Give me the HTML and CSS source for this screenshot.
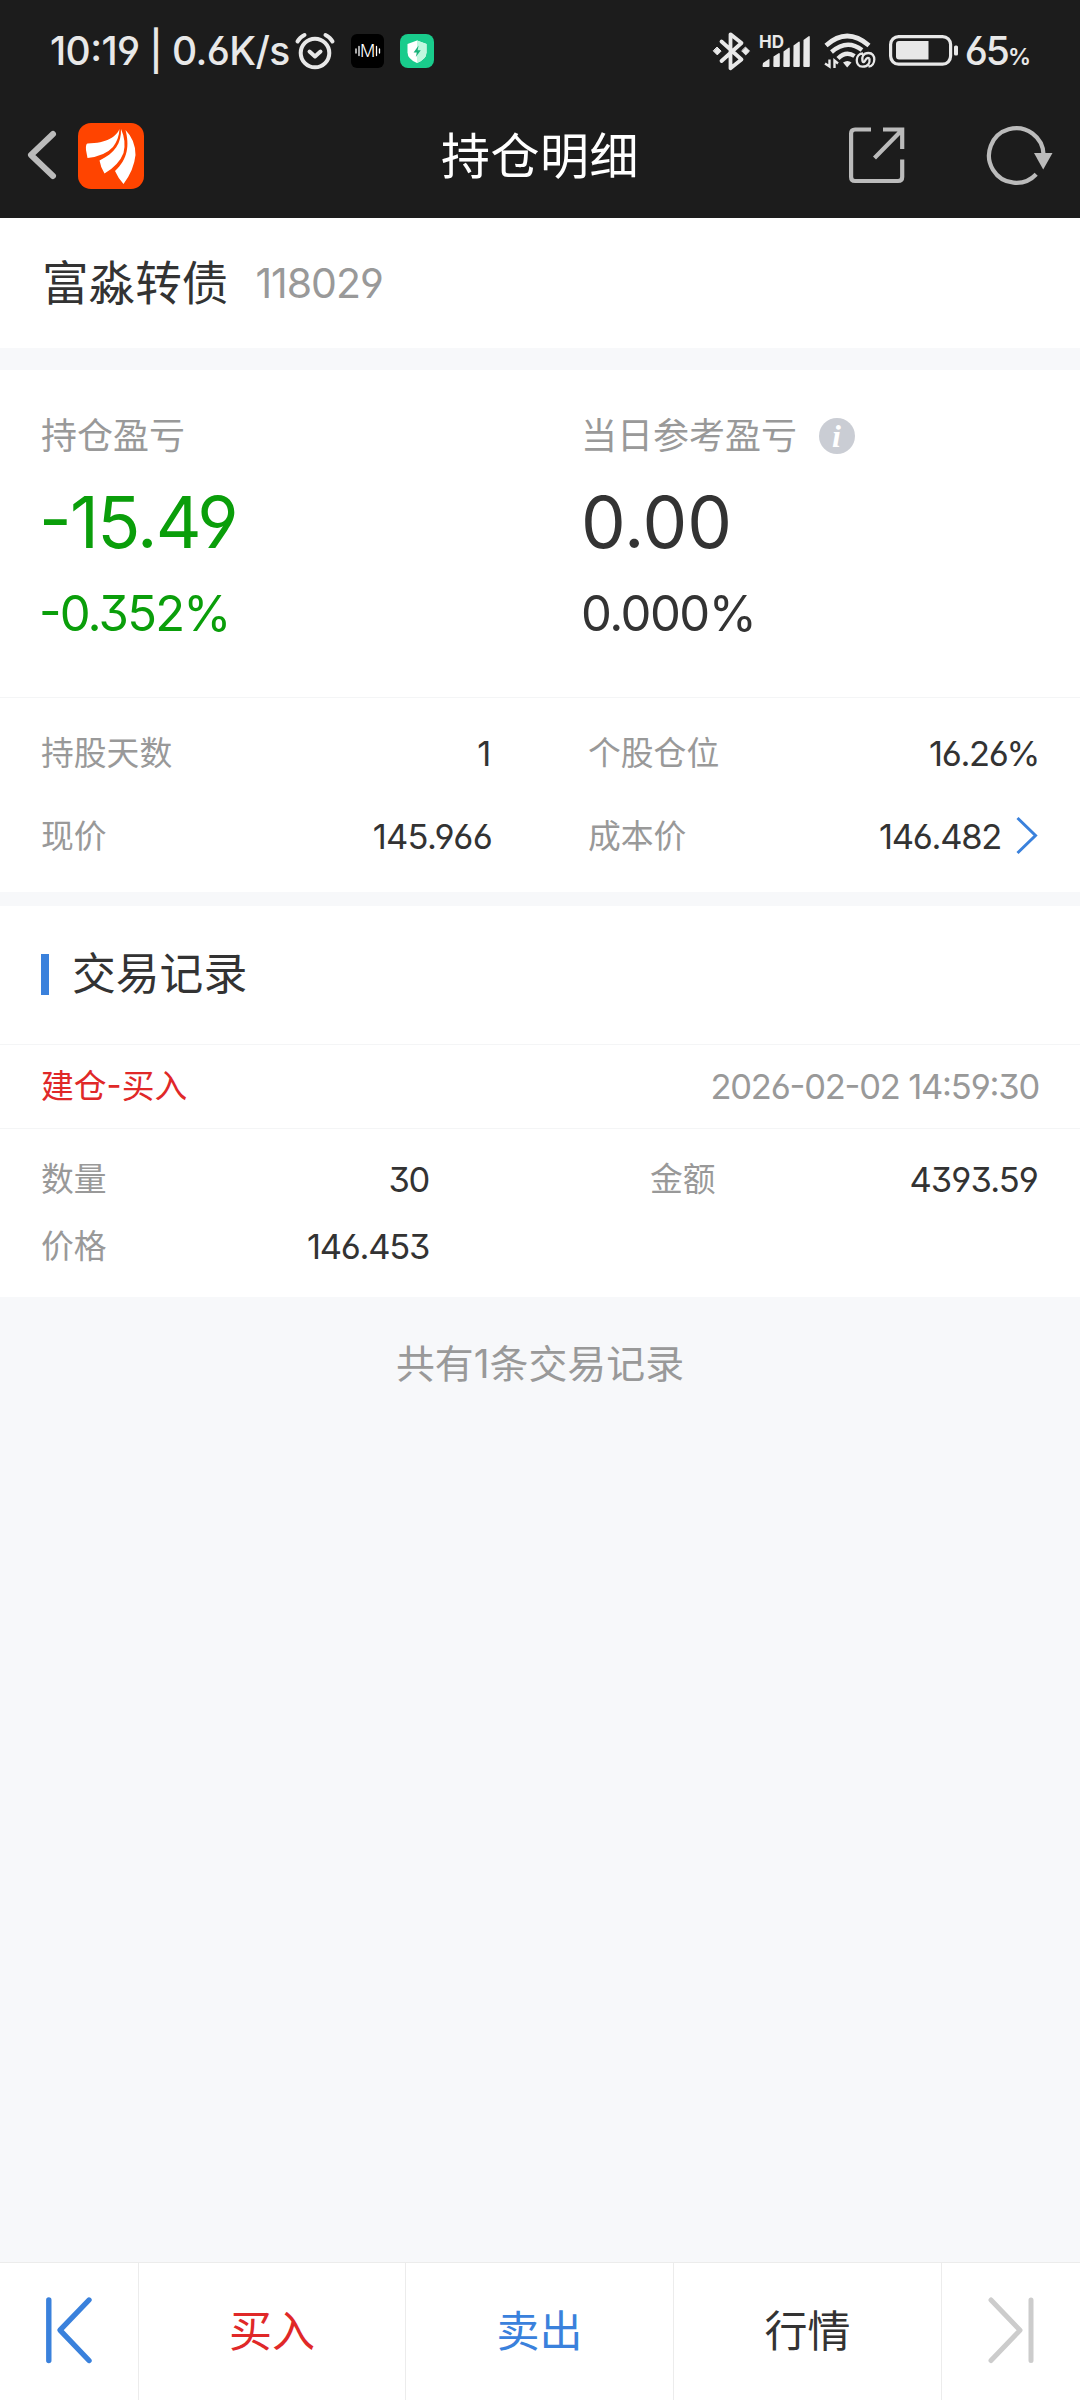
FILE: index.html
```html
<!DOCTYPE html>
<html lang="zh-CN">
<head>
<meta charset="utf-8">
<title>持仓明细</title>
<link rel="stylesheet" href="styles.css">
</head>
<body>
<div class="screen">
  <header class="top">
    <div class="status">
      <span class="clock">10:19 | 0.6K/s</span>
      <svg class="alarm" width="40" height="38" viewBox="0 0 40 38" fill="none" stroke="#e8e8e8" stroke-width="4" stroke-linecap="round" stroke-linejoin="round">
        <circle cx="20" cy="21" r="14.3"/>
        <path d="M14.5 19.5l5.5 5 5.500-5M2.500 9.500Q4.500 5.500 9.500 3M37.500 9.500Q35.500 5.500 30.500 3"/>
      </svg>
      <svg class="chip-m" width="33" height="34" viewBox="0 0 33 34">
        <rect width="33" height="34" rx="6" fill="#000"/>
        <path d="M5 15v4M8 12.500v9M25.500 12.500v9M28.500 15v4" stroke="#fff" stroke-width="1.300" stroke-linecap="round"/>
        <text class="m-text" x="16.700" y="23" text-anchor="middle">M</text>
      </svg>
      <svg class="chip-shield" width="34" height="34" viewBox="0 0 34 34">
        <rect width="34" height="34" rx="8" fill="#19cc8c"/>
        <path d="M17 6.500l9.500 3.500v8.500q0 6.500-9.500 10.500q-9.500-4-9.500-10.500V10z" fill="#fff"/>
        <path d="M17 6.500l9.500 3.500v8.500q0 6.500-9.500 10.500z" fill="#bff8df"/>
        <path d="M18.600 11.500l-5 7h3.200l-1 4.500 5-6.700h-3.200z" fill="#19b27b"/>
      </svg>
      <div class="status-right">
        <svg class="bt" width="37" height="40" viewBox="0 0 37 40" fill="none" stroke="#e8e8e8" stroke-width="3.800" stroke-linejoin="round" stroke-linecap="round">
          <path d="M8.500 10.500L28.500 28.500 17.500 37.300V3.300L28.500 12 8.500 30"/>
          <path d="M4.300 16.300l3.800 3.800-3.800 3.800-3.800-3.800zM32.700 16.300l3.800 3.800-3.800 3.800-3.800-3.800z" fill="#e8e8e8" stroke="#e8e8e8" stroke-width="1"/>
        </svg>
        <svg class="signal" width="50" height="34" viewBox="0 0 50 34" fill="#e8e8e8">
          <text class="hd-text" x="-2" y="14">HD</text>
          <path d="M2 29l6-4q.5 0 .5 1v6q0 1-1 1h-5q-1 0-1-1zM12.500 22.500l5.500-3.500q.8 0 .8 1v12q0 1-1 1h-4.500q-1 0-1-1zM22.500 17.500l5.500-4q.8 0 .8 1v17.500q0 1-1 1h-4.500q-1 0-1-1zM32.500 11.500l5.500-4q.8 0 .8 1v23.500q0 1-1 1h-4.500q-1 0-1-1zM42.500 6l5.500-4q.8 0 .8 1v29q0 1-1 1h-4.500q-1 0-1-1z"/>
        </svg>
        <svg class="wifi" width="52" height="36" viewBox="0 0 52 36" fill="none" stroke="#e8e8e8" stroke-linecap="butt">
          <path d="M2 12.500Q23 -6.500 45 12.500" stroke-width="4.600"/>
          <path d="M7.500 19Q23 5.500 38 17" stroke-width="4.400"/>
          <path d="M14 25.500Q22 17.500 30.500 23" stroke-width="4.400"/>
          <path d="M19 29.500q4.500-3 8.500 0L23.200 34.500z" fill="#e8e8e8" stroke="none"/>
          <path d="M5.500 26.500v7L1 30.500M10.500 35V27.500l3.500 3" stroke-width="2.400"/>
          <path d="M39 20.500C31 20.500 30.500 33.700 38.500 33.700 44.500 33.700 46 30 45.500 25.500M44.500 33.700C52 33 52.500 20 44.500 20 39 20 37.500 24 38.500 28.500M38.500 28.500q1.500 1.500 3-1.500t4-1.500" stroke-width="2.300"/>
        </svg>
        <svg class="battery" width="70" height="32" viewBox="0 0 70 32">
          <rect x="1.600" y="1.600" width="60" height="27.500" rx="8" fill="none" stroke="#e8e8e8" stroke-width="3.200"/>
          <path d="M10 6h29.500v18.500H10q-3 0-3-3V9q0-3 3-3z" fill="#e8e8e8"/>
          <rect x="65" y="10.500" width="4" height="10" rx="1.500" fill="#e8e8e8"/>
        </svg>
        <span class="level">65<small>%</small></span>
      </div>
    </div>
    <nav class="nav">
      <svg class="back" width="30" height="50" viewBox="0 0 30 50" fill="none" stroke="#bbb" stroke-width="6" stroke-linecap="round" stroke-linejoin="round"><path d="M26 3L4 24l22 21"/></svg>
      <svg class="logo" width="66" height="66" viewBox="0 0 66 66">
        <rect width="66" height="66" rx="13" fill="#f40"/>
        <g fill="#fff">
          <path d="M41.500 6C38 14 29 20 9.500 20.500Q7.500 21 8 27L9.500 35Q27 33 35 24 41 16 41.500 6z"/>
          <path d="M43 6C43.500 20 37 30 21.500 37.500Q22.500 44 26.500 50.500Q41 42 45.500 30 48.500 18 43 6z"/>
          <path d="M47.500 7C51.500 22 50 36 37 48Q40 55 45.500 61Q56 47 57.500 32 57.500 17 47.500 7z"/>
        </g>
      </svg>
      <h1 class="title">持仓明细</h1>
      <svg class="share" width="56" height="57" viewBox="0 0 56 57" fill="none" stroke="#bbb" stroke-width="4.200">
        <path d="M22 2.500H6Q2.100 2.500 2.100 6.500V50Q2.100 54 6 54H49Q53.200 54 53.200 50V32.500M34 2.500H53.200V22M51.500 4.500L25.500 31"/>
      </svg>
      <svg class="refresh" width="65" height="60" viewBox="0 0 65 60" fill="none" stroke="#bbb" stroke-width="4.200">
        <path d="M49.200 48.200A27.300 27.300 0 1 1 56.600 29"/>
        <path d="M47 27h18.500L56.200 43.500z" fill="#bbb" stroke="none"/>
      </svg>
    </nav>
  </header>

  <section class="stock">
    <h2 class="stock-name">富淼转债</h2>
    <span class="stock-code">118029</span>
  </section>

  <section class="profit">
    <div class="profit-col">
      <div class="profit-label">持仓盈亏</div>
      <div class="profit-value green">-15.49</div>
      <div class="profit-rate green">-0.352%</div>
    </div>
    <div class="profit-col">
      <div class="profit-label"><span>当日参考盈亏</span>
        <svg class="info" width="36" height="36" viewBox="0 0 36 36"><circle cx="18" cy="17" r="18" fill="#cacdd4"/><text class="info-text" x="17.500" y="28" text-anchor="middle">i</text></svg>
      </div>
      <div class="profit-value zero">0.00</div>
      <div class="profit-rate zero-rate">0.000%</div>
    </div>
  </section>

  <section class="stats">
    <div class="pair"><span class="key">持股天数</span><span class="val one">1</span></div>
    <div class="pair"><span class="key">个股仓位</span><span class="val pct">16.26%</span></div>
    <div class="pair"><span class="key">现价</span><span class="val price">145.966</span></div>
    <div class="pair"><span class="key">成本价</span><span class="val">146.482</span>
      <svg class="more" width="22" height="38" viewBox="0 0 22 38" fill="none" stroke="#3a81dc" stroke-width="3"><path d="M1.500 0L19.500 17.500 1.500 35"/></svg>
    </div>
  </section>

  <section class="records">
    <h3 class="records-title"><span>交易记录</span></h3>
    <div class="record-head"><span class="record-type">建仓-买入</span><time class="record-time">2026-02-02 14:59:30</time></div>
    <div class="record-body">
      <div class="pair"><span class="key">数量</span><span class="val">30</span></div>
      <div class="pair"><span class="key">金额</span><span class="val amount">4393.59</span></div>
      <div class="pair"><span class="key">价格</span><span class="val">146.453</span></div>
    </div>
  </section>

  <p class="total">共有1条交易记录</p>

  <footer class="actions">
    <div class="action"><svg width="46" height="66" viewBox="0 0 46 66" fill="none" stroke="#3a81dc" stroke-width="5.400" stroke-linecap="round" stroke-linejoin="round"><path d="M2.800 2v60.500M43 2L14 32.200 43 62.500"/></svg></div>
    <div class="action buy">买入</div>
    <div class="action sell">卖出</div>
    <div class="action quote">行情</div>
    <div class="action"><svg width="46" height="66" viewBox="0 0 46 66" fill="none" stroke="#ccc" stroke-width="5" stroke-linecap="round" stroke-linejoin="round"><path d="M43 2v60.500M3 2L32 32.200 3 62.500"/></svg></div>
  </footer>
</div>
</body>
</html>
```
FILE: styles.css
```css
* { box-sizing: border-box; margin: 0; padding: 0; }

body {
  width: 1080px;
  background: #f7f8fa;
  color: #333;
  font-family: Inter, "Noto Sans CJK SC", sans-serif;
  line-height: 1.2;
  font-feature-settings: "cv03", "cv04", "cv09", "case";
}

h1, h2, h3 { font-weight: 400; }
svg { display: block; flex: none; overflow: visible; }

.screen { display: flex; flex-direction: column; height: 2400px; }

.top { height: 218px; background: #1c1c1c; }

.status {
  display: flex;
  align-items: center;
  height: 102px;
  padding-left: 50px;
  padding-right: 50px;
  color: #e8e8e8;
  white-space: nowrap;
}
.clock { width: 245px; font-size: 39px; font-weight: 500; letter-spacing: -.600px; }
.chip-m { margin-left: 16px; }
.chip-shield { margin-left: 16px; }
.m-text { fill: #fff; font-size: 17px; font-weight: 300; }
.status-right { display: flex; align-items: center; margin-left: auto; }
.signal { margin-left: 11px; }
.hd-text { font-size: 17px; font-weight: 700; }
.wifi { margin-left: 13px; }
.battery { margin-left: 13px; }
.level { margin-left: 6px; font-size: 39px; font-weight: 500; letter-spacing: -2px; }
.level small { font-size: 23px; font-weight: 600; letter-spacing: -1px; }

.nav { display: flex; align-items: center; height: 107px; padding: 0 28px 0 27px; }
.logo { margin-left: 21px; }
.title { margin-left: 297px; padding-top: 3px; font-size: 49px; letter-spacing: .5px; color: #fff; }
.share { margin-left: 210px; }
.refresh { margin-left: auto; }

.stock {
  display: flex;
  align-items: center;
  height: 130px;
  padding-top: 2px;
  padding-left: 42px;
  background: #fff;
}
.stock-name { font-size: 46.600px; }
.stock-code { margin-left: 27px; font-size: 41px; color: #999; letter-spacing: -1px; }

.profit {
  display: grid;
  grid-template-columns: 540px 540px;
  height: 328px;
  margin-top: 22px;
  padding-top: 35px;
  background: #fff;
  border-bottom: 1px solid #f4f5f6;
}
.profit-col { padding-left: 41px; }
.profit-label { display: flex; align-items: center; height: 60px; padding-top: 3px; font-size: 36px; color: #999; }
.info { margin-left: 22px; }
.info-text { fill: #fff; font: italic 700 32px "Liberation Serif", serif; }
.profit-value { height: 114px; line-height: 114px; font-size: 71px; letter-spacing: -1.600px; }
.profit-rate { height: 70px; line-height: 70px; font-size: 49px; letter-spacing: -1.800px; }
.zero { letter-spacing: -.100px; }
.zero-rate { letter-spacing: -1.500px; }
.green { color: #0a9e0a; text-indent: -2px; }

.stats {
  display: grid;
  grid-template-columns: 451px 450px;
  grid-auto-rows: 83px;
  column-gap: 96px;
  padding: 14px 41px;
  background: #fff;
}
.pair { display: flex; align-items: center; }
.key { padding-top: 1px; font-size: 32.800px; color: #999; }
.val { margin-left: auto; font-size: 34.500px; letter-spacing: -1.300px; }
.val.one { margin-right: 2px; }
.val.price { letter-spacing: -.700px; }
.val.amount { letter-spacing: -.900px; }
.val.pct { margin-right: -1px; }
.more { margin-left: 15px; }

.records { margin-top: 14px; background: #fff; }
.records-title {
  display: flex;
  align-items: center;
  height: 138px;
  padding: 0 0 2px 41px;
  font-size: 43.800px;
}
.records-title span { padding-top: 3px; }
.records-title::before { content: ""; width: 8px; height: 41px; margin-right: 23px; background: #3a81dc; }
.record-head {
  display: flex;
  align-items: center;
  justify-content: space-between;
  height: 85px;
  padding: 0 41px;
  border-top: 1px solid #f4f5f6;
  border-bottom: 1px solid #f4f5f6;
}
.record-type { padding-top: 1px; font-size: 32.800px; color: #e02828; }
.record-time { font-size: 34.500px; color: #999; letter-spacing: -1.200px; }
.record-body {
  display: grid;
  grid-template-columns: 388px 388px;
  grid-auto-rows: 67px;
  column-gap: 221px;
  padding: 17px 41px;
}

.total { height: 134px; line-height: 134px; font-size: 38.900px; text-align: center; color: #999; }

.actions {
  display: grid;
  grid-template-columns: 139px 267px 268px 268px 138px;
  height: 138px;
  margin-top: auto;
  background: #fff;
  border-top: 1px solid #ececec;
}
.action {
  display: flex;
  align-items: center;
  justify-content: center;
  font-size: 43px;
  border-right: 1px solid #ececec;
}
.action svg { margin-bottom: 2px; }
.action:last-child { border-right: 0; }
.buy { color: #e02828; }
.sell { color: #3a81dc; }
```
